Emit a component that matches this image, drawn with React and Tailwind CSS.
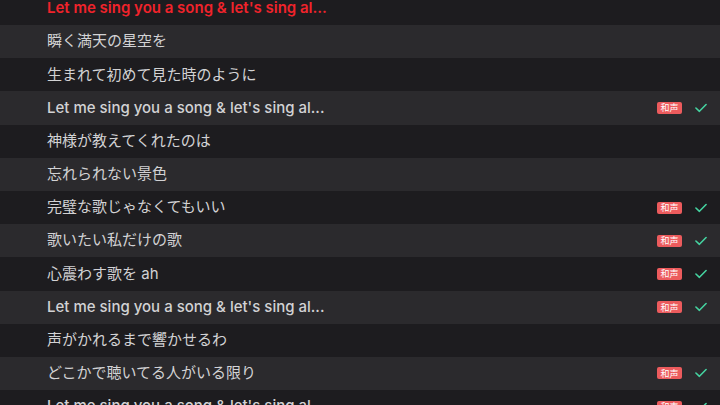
import React from "react";

const lyrics = [
  { text: "Let me sing you a song & let's sing al...", current: true },
  { text: "瞬く満天の星空を" },
  { text: "生まれて初めて見た時のように" },
  { text: "Let me sing you a song & let's sing al...", harmony: true },
  { text: "神様が教えてくれたのは" },
  { text: "忘れられない景色" },
  { text: "完璧な歌じゃなくてもいい", harmony: true },
  { text: "歌いたい私だけの歌", harmony: true },
  { text: "心震わす歌を ah", harmony: true },
  { text: "Let me sing you a song & let's sing al...", harmony: true },
  { text: "声がかれるまで響かせるわ" },
  { text: "どこかで聴いてる人がいる限り", harmony: true },
  { text: "Let me sing you a song & let's sing al...", harmony: true },
];

// latin-only lines read a touch heavier than the japanese ones
const isLatin = (s) => /^[\x00-\x7f]*$/.test(s);

const CheckMark = () => (
  <svg width="13" height="10" viewBox="0 0 13 10" fill="none">
    <path d="M1 5 L4.8 8.6 L12 1.2" stroke="#45d3a0" strokeWidth="1.7" strokeLinecap="round" strokeLinejoin="round" />
  </svg>
);

export default function App() {
  return (
    <div
      className="h-screen w-full overflow-hidden bg-[#1d1c1f]"
      style={{ fontFamily: 'Inter, "Noto Sans CJK JP", sans-serif' }}
    >
      <div className="-mt-[8.2px]">
        {lyrics.map((line, i) => (
          <div
            key={i}
            className={`flex h-[33.2px] items-center pl-[47px] pr-[13px] ${
              i % 2 === 0 ? "bg-[#1d1c1f]" : "bg-[#2b2a2d]"
            }`}
          >
            <span
              className={`flex-1 text-[15px] ${
                line.current
                  ? "font-semibold text-[#f0232b]"
                  : isLatin(line.text)
                  ? "font-medium text-[#d2d2d4]"
                  : "font-normal text-[#d2d2d4]"
              }`}
            >
              {line.text}
            </span>
            {line.harmony && (
              <div className="flex items-center">
                <span className="flex h-[12px] w-[25px] items-center justify-center rounded-[2px] bg-[#ec5b5d] text-[9px] leading-none text-white">
                  和声
                </span>
                <span className="ml-[13px] flex w-[12px] items-center justify-center">
                  <CheckMark />
                </span>
              </div>
            )}
          </div>
        ))}
      </div>
    </div>
  );
}
